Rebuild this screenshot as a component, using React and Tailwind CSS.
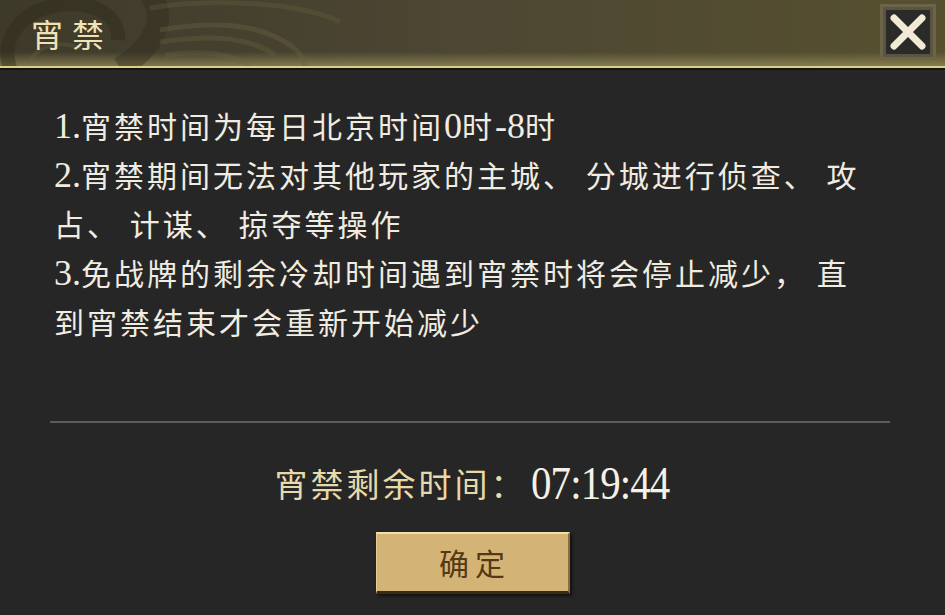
import React from 'react';

// each visual line, with latin runs marked so they can be set larger
const rules = [
  [[['1.', true], ['宵禁时间为每日北京时间', false], ['0', true], ['时', false], ['-8', true], ['时', false]]],
  [
    [['2.', true], ['宵禁期间无法对其他玩家的主城、 分城进行侦查、 攻', false]],
    [['占、 计谋、 掠夺等操作', false]],
  ],
  [
    [['3.', true], ['免战牌的剩余冷却时间遇到宵禁时将会停止减少， 直', false]],
    [['到宵禁结束才会重新开始减少', false]],
  ],
];

function HeaderPattern() {
  return (
    <svg className="absolute left-0 top-0" width="420" height="68" viewBox="0 0 420 68" fill="none">
      <path d="M10 68 C0 40 20 10 60 5 C100 0 120 20 118 40" stroke="#2f2b1d" strokeWidth="14" opacity="0.45" />
      <path d="M150 -5 C170 20 150 50 120 68" stroke="#2f2b1d" strokeWidth="22" opacity="0.4" />
      <path d="M160 30 C220 20 260 25 290 45 C300 52 305 60 305 68" stroke="#6a6243" strokeWidth="5" opacity="0.4" />
      <path d="M160 42 C215 34 250 38 275 55" stroke="#6a6243" strokeWidth="5" opacity="0.35" />
      <path d="M165 55 C205 50 230 53 250 66" stroke="#6a6243" strokeWidth="5" opacity="0.3" />
      <path d="M150 8 C210 -2 300 2 340 22" stroke="#6a6243" strokeWidth="5" opacity="0.3" />
      <path d="M30 60 C40 45 60 40 80 48" stroke="#6a6243" strokeWidth="4" opacity="0.3" />
    </svg>
  );
}

export default function App() {
  return (
    <div
      className="w-[945px] h-[615px] flex flex-col bg-[#262626] overflow-hidden"
      style={{ fontFamily: '"Liberation Serif", "Noto Sans CJK SC", serif' }}
    >
      {/* title bar */}
      <div className="relative h-[70px] shrink-0 bg-gradient-to-r from-[#3e3a2a] via-[#4d4733] to-[#57502f]">
        <div className="absolute inset-x-0 bottom-[2px] h-[16px] bg-gradient-to-b from-transparent to-[#a49a60] opacity-70" />
        <HeaderPattern />
        <div className="absolute inset-x-0 bottom-[2px] h-[2px] bg-[#d9d08e]" />
        <div className="absolute inset-x-0 bottom-0 h-[2px] bg-[#17140c]" />
        <div className="relative flex items-center justify-between h-[66px] pl-[31px] pr-[9px]">
          <span
            className="text-[32px] leading-none tracking-[9px] text-[#f1e2b5]"
            style={{ fontFamily: '"Noto Sans CJK SC", sans-serif' }}
          >
            宵禁
          </span>
          <button className="w-[56px] h-[56px] -mt-[2px] border-[3px] border-[#6b6449] bg-[#5a5440] p-[3px]">
            <div className="w-full h-full bg-[#2a2a28] flex items-center justify-center">
              <svg width="36" height="36" viewBox="0 0 36 36">
                <path d="M4 4 L32 32 M32 4 L4 32" stroke="#f1ebd6" strokeWidth="7" strokeLinecap="round" />
              </svg>
            </div>
          </button>
        </div>
      </div>

      {/* rules */}
      <div
        className="pt-[31px] pl-[54px] text-[30px] leading-[49px] text-[#f0ece1] tracking-[3px]"
        style={{ fontFamily: '"Noto Sans CJK SC", sans-serif' }}
      >
        {rules.map((lines, i) =>
          lines.map((parts, j) => (
            <div key={`${i}-${j}`} className="h-[49px] whitespace-nowrap">
              {parts.map(([txt, latin], k) =>
                latin ? (
                  <span
                    key={k}
                    className="text-[36px] leading-none tracking-[0px]"
                    style={{ fontFamily: '"Liberation Serif", serif' }}
                  >
                    {txt}
                  </span>
                ) : (
                  <span key={k}>{txt}</span>
                )
              )}
            </div>
          ))
        )}
      </div>

      <div className="ml-[50px] mr-[55px] mt-[75px] h-[2px] bg-[#5c5c5c]" />

      {/* countdown */}
      <div className="mt-[35px] h-[50px] flex items-center justify-center pl-[2px]">
        <span
          className="text-[33px] leading-[50px] text-[#e6d9aa] tracking-[3px]"
          style={{ fontFamily: '"Noto Sans CJK SC", sans-serif' }}
        >
          宵禁剩余时间：
        </span>
        <span className="inline-block w-[142px] h-[50px] ml-[4px]">
          <span className="inline-block origin-left scale-x-[0.87] text-[47px] leading-[50px] text-[#f5f1e6] tracking-[-1px] whitespace-nowrap">
            07:19:44
          </span>
        </span>
      </div>

      <div className="mt-[24px] flex justify-center">
        <button
          className="w-[194px] h-[62px] bg-[#d3b476] border-t-[2px] border-t-[#f2e0a6] border-l border-l-[#e6cf92] border-r-[2px] border-r-[#8a6f3e] border-b-[3px] border-b-[#3a2a12] shadow-[2px_2px_3px_rgba(0,0,0,0.6)] text-[30px] text-[#553815] tracking-[6px] pl-[6px]"
          style={{ fontFamily: '"Noto Sans CJK SC", sans-serif' }}
        >
          确定
        </button>
      </div>
    </div>
  );
}
